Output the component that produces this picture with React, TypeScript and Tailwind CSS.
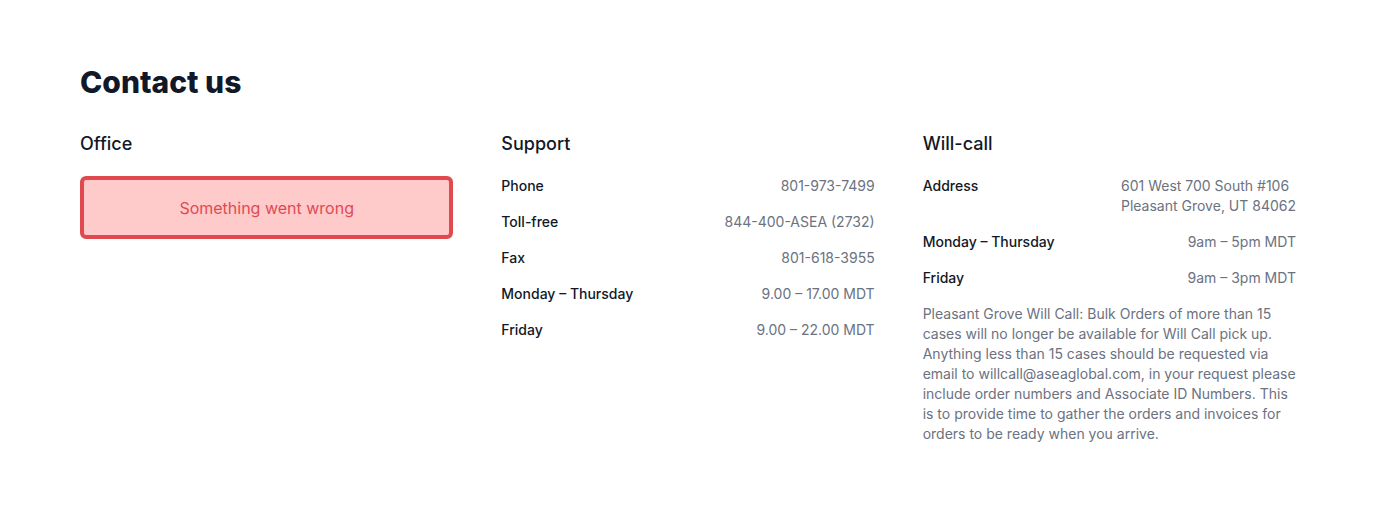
import React from "react";

const Row = ({ label, children }: { label: string; children: React.ReactNode }) => (
  <div className="flex justify-between text-sm leading-5">
    <div className="font-medium text-[#111827]">{label}</div>
    <div className="text-[#6b7280]">{children}</div>
  </div>
);

export default function App() {
  return (
    <div className="min-h-[508px] bg-white" style={{ fontFamily: "Inter, 'Noto Sans', sans-serif" }}>
      <div className="mx-[80px] pt-[64px]">
        <h1 className="text-[30px] leading-9 font-extrabold text-[#111827]">Contact us</h1>
        <div className="mt-[30px] grid grid-cols-3 gap-x-12">
          <div>
            <h2 className="text-lg leading-7 font-medium text-[#111827]">Office</h2>
            <div className="mt-[18px] flex h-[63px] items-center justify-center rounded-md border-4 border-[#e04a4f] bg-[#ffcaca] text-base text-[#de4a55]">
              Something went wrong
            </div>
          </div>
          <div>
            <h2 className="text-lg leading-7 font-medium text-[#111827]">Support</h2>
            <div className="mt-[18px] flex flex-col gap-4">
              <Row label="Phone">801-973-7499</Row>
              <Row label="Toll-free">844-400-ASEA (2732)</Row>
              <Row label="Fax">801-618-3955</Row>
              <Row label="Monday – Thursday">9.00 – 17.00 MDT</Row>
              <Row label="Friday">9.00 – 22.00 MDT</Row>
            </div>
          </div>
          <div>
            <h2 className="text-lg leading-7 font-medium text-[#111827]">Will-call</h2>
            <div className="mt-[18px] flex flex-col gap-4">
              <Row label="Address">
                <div className="text-left">
                  601 West 700 South #106
                  <br />
                  Pleasant Grove, UT 84062
                </div>
              </Row>
              <Row label="Monday – Thursday">9am – 5pm MDT</Row>
              <Row label="Friday">9am – 3pm MDT</Row>
              <p className="text-sm leading-5 text-[#6b7280]">
                Pleasant Grove Will Call: Bulk Orders of more than 15 cases will no longer be available for Will Call pick up. Anything less than 15 cases should be requested via email to willcall@aseaglobal.com, in your request please include order numbers and Associate ID Numbers. This is to provide time to gather the orders and invoices for orders to be ready when you arrive.
              </p>
            </div>
          </div>
        </div>
      </div>
    </div>
  );
}
